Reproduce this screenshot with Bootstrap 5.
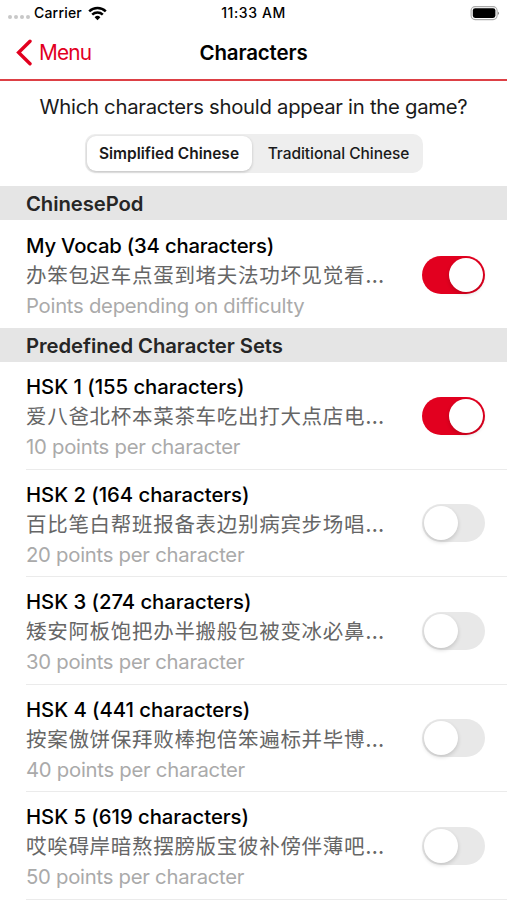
<!DOCTYPE html>
<html lang="en">
<head>
<meta charset="utf-8">
<meta name="viewport" content="width=device-width, initial-scale=1">
<title>Characters</title>
<link href="https://cdn.jsdelivr.net/npm/bootstrap@5.3.0/dist/css/bootstrap.min.css" rel="stylesheet">
<style>
  :root { --brand: #e2001f; }
  body { font-family: Inter, "Noto Sans CJK SC", sans-serif; color: #000; height: 900px; overflow: hidden; background: #fff; }
  .status-bar { height: 26px; font-size: 14px; font-weight: 500; padding: 0 8px; }
  .signal { gap: 2px; width: 26px; padding-top: 8px; }
  .signal i { width: 4px; height: 4px; background: #c8c8c8; border-radius: 50%; }
  .carrier { width: 54px; letter-spacing: .2px; }
  .carrier, .clock { margin-top: -1px; }
  .clock { letter-spacing: .6px; }
  .title-bar { height: 53px; padding: 0 16px; }
  .title-bar a { color: var(--brand); font-size: 20.8px; }
  .back-label { margin-left: 6px; letter-spacing: -.8px; }
  .title-bar h1 { font-size: 20.5px; font-weight: 600; letter-spacing: -.15px; padding-top: 1px; }
  .rule { height: 2px; background: #dd4045; }
  .question { height: 53px; font-size: 20.3px; letter-spacing: -.27px; color: #1a1a1a; white-space: nowrap; }
  .segments { width: 338px; height: 39px; background: #eee; border-radius: 10px; padding: 2px; margin-bottom: 13px; }
  .segments button { font-size: 15.5px; color: #1a1a1a; font-weight: 500; border: 0; padding: 0; border-radius: 9px; white-space: nowrap; }
  .segments .plain { padding-left: 5px; letter-spacing: -.05px; }
  .segments .chosen { flex: 0 0 165px; background: #fff; font-weight: 600; box-shadow: 0 1px 3px rgba(0,0,0,.2); }
  .section-head { height: 34px; background: #e5e5e5; padding: 2px 0 0 26px; font-size: 20.3px; letter-spacing: -.07px; font-weight: 600; color: #262626; }
  .set-row { height: 107.5px; margin-left: 26px; padding-right: 22px; border-bottom: 1px solid #ebebeb; }
  .set-row.tall { height: 108px; border-bottom: 0; }
  .set-text { width: 362px; line-height: 30px; white-space: nowrap; padding-top: 4px; }
  .set-name { font-size: 20.3px; font-weight: 500; letter-spacing: -.03px; }
  .tall .set-name { letter-spacing: -.2px; }
  .set-chars { font-family: "Noto Sans CJK SC", sans-serif; font-size: 20.5px; letter-spacing: .7px; font-weight: 400; color: #666; height: 30px; line-height: 27px; }
  .more { font-family: Inter, sans-serif; font-size: 22px; letter-spacing: 0; }
  .set-points { font-size: 20.3px; color: #aaa; letter-spacing: -.26px; }
  .toggle { width: 63px; height: 38px; border-radius: 19px; background: #e8e8e8; padding: 2px; margin-top: 1px; }
  .toggle span { width: 34px; height: 34px; border-radius: 50%; background: #fff; box-shadow: 0 2px 4px rgba(0,0,0,.16); }
  .toggle.on { background: var(--brand); }
</style>
</head>
<body>
<header>
  <div class="status-bar row g-0 align-items-center">
    <div class="col d-flex align-items-center">
      <span class="signal d-flex"><i></i><i></i><i></i><i></i></span>
      <span class="carrier">Carrier</span>
      <svg class="wifi" width="19" height="15" viewBox="0 0 19 15" fill="none" stroke="#000"><path d="M1.2 5.4a12 12 0 0 1 16.6 0M4.2 8.6a7.7 7.7 0 0 1 10.6 0" stroke-width="2.5"/><path d="M9.5 14.2 6.6 11.2a4.2 4.2 0 0 1 5.8 0z" fill="#000" stroke="none"/></svg>
    </div>
    <div class="col-auto clock">11:33 AM</div>
    <div class="col d-flex justify-content-end"><svg width="30" height="15" viewBox="0 0 30 15"><rect x="2.1" y=".6" width="26" height="13" rx="4" fill="none" stroke="#aaa" stroke-width="1.1"/><rect x="3.8" y="2.3" width="22.6" height="9.6" rx="2.3"/><path d="M28.8 5.4v3.6q1.2-.6 1.2-1.8t-1.2-1.8z" fill="#888"/></svg></div>
  </div>
  <nav class="title-bar row g-0 align-items-center">
    <a href="#" class="col d-flex align-items-center text-decoration-none">
      <svg width="17" height="27" viewBox="0 0 17 27" fill="none" stroke="currentColor" stroke-width="3.4" stroke-linecap="round"><path d="M14 2.2 2.6 13.5 14 24.8"/></svg>
      <span class="back-label">Menu</span>
    </a>
    <h1 class="col-auto m-0">Characters</h1>
    <div class="col"></div>
  </nav>
  <div class="rule"></div>
</header>
<main>
  <div class="question d-flex align-items-center justify-content-center"><span>Which characters should appear in the game?</span></div>
  <div class="segments d-flex mx-auto"><button class="chosen">Simplified Chinese</button><button class="plain flex-fill bg-transparent">Traditional Chinese</button></div>
  <div class="section-head d-flex align-items-center">ChinesePod</div>
  <div class="set-row tall d-flex align-items-center justify-content-between">
    <div class="set-text"><div class="set-name">My Vocab (34 characters)</div><div class="set-chars">办笨包迟车点蛋到堵夫法功坏见觉看<span class="more">…</span></div><div class="set-points">Points depending on difficulty</div></div>
    <div class="toggle on d-flex justify-content-end"><span></span></div>
  </div>
  <div class="section-head d-flex align-items-center">Predefined Character Sets</div>
  <div class="set-row d-flex align-items-center justify-content-between">
    <div class="set-text"><div class="set-name">HSK 1 (155 characters)</div><div class="set-chars">爱八爸北杯本菜茶车吃出打大点店电<span class="more">…</span></div><div class="set-points">10 points per character</div></div>
    <div class="toggle on d-flex justify-content-end"><span></span></div>
  </div>
  <div class="set-row d-flex align-items-center justify-content-between">
    <div class="set-text"><div class="set-name">HSK 2 (164 characters)</div><div class="set-chars">百比笔白帮班报备表边别病宾步场唱<span class="more">…</span></div><div class="set-points">20 points per character</div></div>
    <div class="toggle d-flex"><span></span></div>
  </div>
  <div class="set-row d-flex align-items-center justify-content-between">
    <div class="set-text"><div class="set-name">HSK 3 (274 characters)</div><div class="set-chars">矮安阿板饱把办半搬般包被变冰必鼻<span class="more">…</span></div><div class="set-points">30 points per character</div></div>
    <div class="toggle d-flex"><span></span></div>
  </div>
  <div class="set-row d-flex align-items-center justify-content-between">
    <div class="set-text"><div class="set-name">HSK 4 (441 characters)</div><div class="set-chars">按案傲饼保拜败棒抱倍笨遍标并毕博<span class="more">…</span></div><div class="set-points">40 points per character</div></div>
    <div class="toggle d-flex"><span></span></div>
  </div>
  <div class="set-row d-flex align-items-center justify-content-between">
    <div class="set-text"><div class="set-name">HSK 5 (619 characters)</div><div class="set-chars">哎唉碍岸暗熬摆膀版宝彼补傍伴薄吧<span class="more">…</span></div><div class="set-points">50 points per character</div></div>
    <div class="toggle d-flex"><span></span></div>
  </div>
</main>
<script src="https://cdn.jsdelivr.net/npm/bootstrap@5.3.0/dist/js/bootstrap.bundle.min.js"></script>
</body>
</html>
